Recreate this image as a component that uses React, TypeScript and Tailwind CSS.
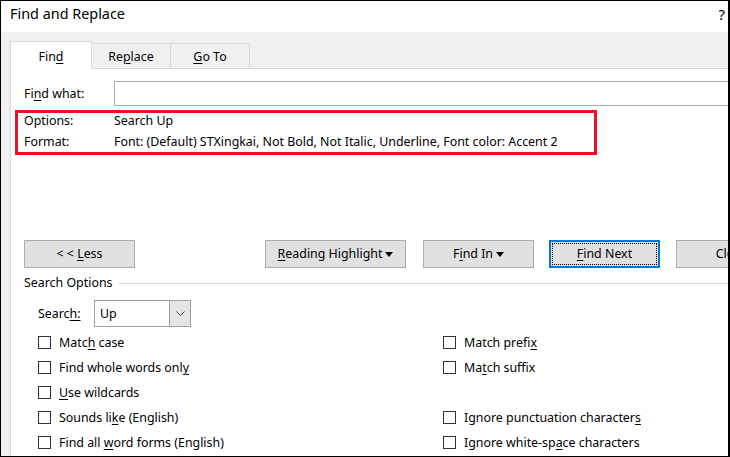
import React from 'react'

const font = { fontFamily: '"Noto Sans", "Liberation Sans", sans-serif' }

function U({ children }: { children: React.ReactNode }) {
  return <span className="underline underline-offset-2 decoration-1">{children}</span>
}

function Caret() {
  return (
    <svg width="8" height="5" viewBox="0 0 8 5" className="ml-[3px] inline-block">
      <path d="M0 0h8L4 5z" fill="#000" />
    </svg>
  )
}

function Btn({ w, children, className = '' }: { w: string; children: React.ReactNode; className?: string }) {
  return (
    <div
      className={`${w} h-[28px] shrink-0 flex items-center justify-center border border-[#adadad] bg-[#e1e1e1] whitespace-pre pt-px ${className}`}
    >
      {children}
    </div>
  )
}

function Check({ children }: { children: React.ReactNode }) {
  return (
    <div className="h-[25px] flex items-center">
      <div className="w-[13px] h-[13px] border border-[#333] bg-white shrink-0" />
      <span className="ml-[8px] whitespace-nowrap pt-px">{children}</span>
    </div>
  )
}

export default function App() {
  return (
    <div
      className="w-[730px] h-[457px] overflow-hidden bg-white border-t border-l border-b border-r-2 border-black text-[12.4px] text-black flex flex-col"
      style={font}
    >
      {/* title bar */}
      <div className="h-[31px] shrink-0 flex items-start justify-between pl-[9px] pr-[3px] pt-[2px]">
        <span className="text-[14.4px]">Find and Replace</span>
        <span className="text-[15px]">?</span>
      </div>

      <div className="flex-1 bg-[#f0f0f0] pl-[9px] pt-[9px] flex flex-col">
        {/* tabs */}
        <div className="h-[27px] flex items-end shrink-0">
          <div className="relative z-10 w-[82px] h-[28px] -mb-px bg-white border-t border-l border-r border-[#d9d9d9] flex items-center justify-center pt-[4px]">
            Fin<U>d</U>
          </div>
          <div className="w-[79px] h-[25px] border-t border-r border-[#d9d9d9] flex items-center justify-center pt-[3px]">
            Re<U>p</U>lace
          </div>
          <div className="w-[79px] h-[25px] border-t border-r border-[#d9d9d9] flex items-center justify-center pt-[3px]">
            <U>G</U>o To
          </div>
        </div>

        {/* panel */}
        <div className="flex-1 bg-white border-t border-l border-[#d9d9d9] flex flex-col w-[820px]">
          <div className="mt-[12px] h-[25px] flex items-center pl-[13px]">
            <span className="w-[90px] shrink-0 pt-[2px]">
              Fi<U>n</U>d what:
            </span>
            <div className="w-[650px] h-[25px] border border-[#ababab] bg-white" />
          </div>

          <div className="mt-[4px] ml-[4px] w-[582px] h-[45px] border-[3px] border-[#e81224] pl-[6px]">
            <div className="h-[15px] leading-[15px] flex">
              <span className="w-[90px] shrink-0">Options:</span>
              <span>Search Up</span>
            </div>
            <div className="mt-[6px] h-[15px] leading-[15px] flex whitespace-nowrap">
              <span className="w-[90px] shrink-0">Format:</span>
              <span>Font: (Default) STXingkai, Not Bold, Not Italic, Underline, Font color: Accent 2</span>
            </div>
          </div>

          {/* buttons */}
          <div className="mt-[85px] flex pl-[13px]">
            <Btn w="w-[111px]">
              {'< < '}
              <U>L</U>ess
            </Btn>
            <Btn w="w-[141px]" className="ml-[130px]">
              <U>R</U>eading Highlight
              <Caret />
            </Btn>
            <Btn w="w-[111px]" className="ml-[17px]">
              F<U>i</U>nd In
              <Caret />
            </Btn>
            <div className="ml-[15px] w-[111px] h-[28px] shrink-0 border-2 border-[#0078d7] bg-[#e1e1e1] p-px">
              <div className="w-full h-full border border-dotted border-black flex items-center justify-center pt-px">
                <U>F</U>ind Next
              </div>
            </div>
            <Btn w="w-[111px]" className="ml-[16px]">
              Close
            </Btn>
          </div>

          {/* search options */}
          <div className="mt-[7px] h-[16px] flex items-center pl-[13px]">
            <span className="whitespace-nowrap">Search Options</span>
            <div className="flex-1 h-px bg-[#dcdcdc] ml-[6px]" />
          </div>

          <div className="mt-[9px] h-[27px] flex items-center pl-[27px]">
            <span className="w-[56px] shrink-0 pt-px">
              Searc<U>h:</U>
            </span>
            <div className="w-[97px] h-[27px] border border-[#a0a0a0] flex">
              <div className="flex-1 flex items-center pl-[5px] pt-px">Up</div>
              <div className="w-[21px] border-l border-[#a0a0a0] bg-[#e5e5e5] flex items-center justify-center">
                <svg width="9" height="5" viewBox="0 0 9 5">
                  <path d="M0.5 0.5L4.5 4.5L8.5 0.5" fill="none" stroke="#555" strokeWidth="1" />
                </svg>
              </div>
            </div>
          </div>

          <div className="mt-[3px] ml-[27px] grid grid-cols-[405px_1fr]">
            <Check>
              Matc<U>h</U> case
            </Check>
            <Check>
              Match prefi<U>x</U>
            </Check>
            <Check>
              Find whole words onl<U>y</U>
            </Check>
            <Check>
              Ma<U>t</U>ch suffix
            </Check>
            <Check>
              <U>U</U>se wildcards
            </Check>
            <div className="h-[25px]" />
            <Check>
              Sounds li<U>k</U>e (English)
            </Check>
            <Check>
              Ignore punctuation character<U>s</U>
            </Check>
            <Check>
              Find all <U>w</U>ord forms (English)
            </Check>
            <Check>
              Ignore white-sp<U>a</U>ce characters
            </Check>
          </div>
        </div>
      </div>
    </div>
  )
}
